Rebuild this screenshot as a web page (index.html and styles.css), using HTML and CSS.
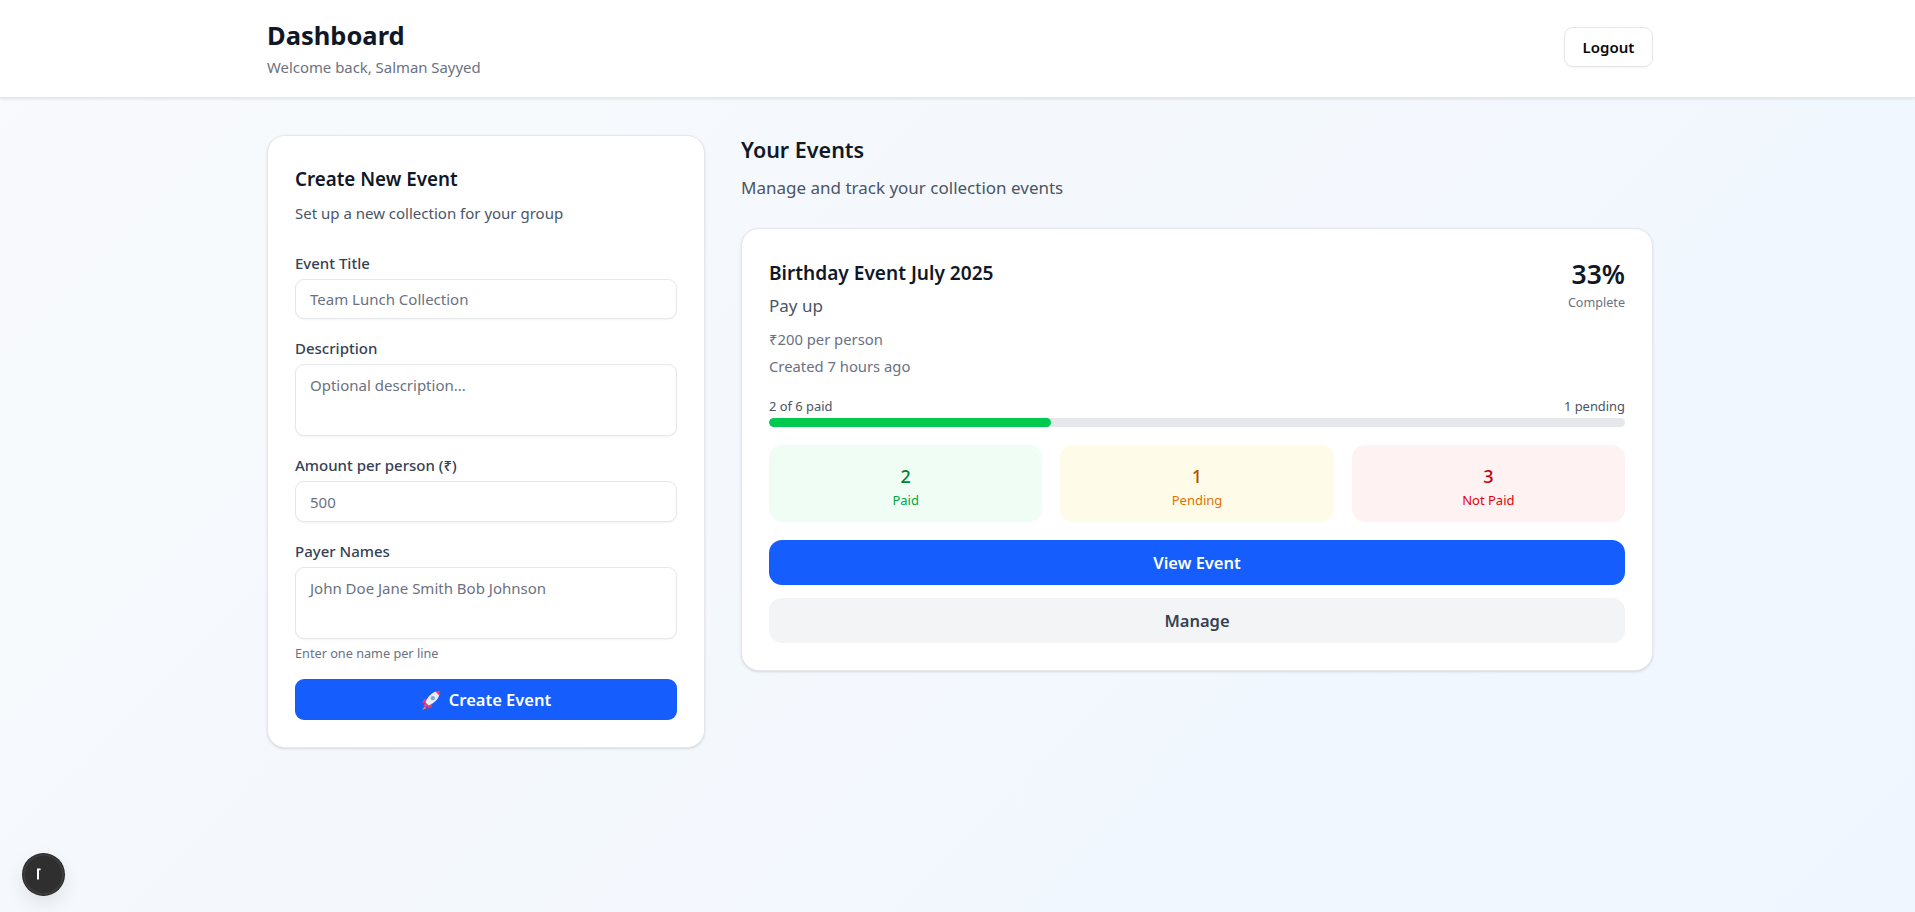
FILE: index.html
```html
<!DOCTYPE html>
<html>
<head>
<title>Dashboard</title>
<meta charset="UTF-8" />
<link rel="stylesheet" href="styles.css">
</head>
<body>
<header class="topbar">
	<div class="topbar-inner">
		<div>
			<h1 class="page-title">Dashboard</h1>
			<p class="page-sub">Welcome back, Salman Sayyed</p>
		</div>
		<button class="logout" type="button">Logout</button>
	</div>
</header>
<main class="layout">
	<section class="card create">
		<h2 class="create-title">Create New Event</h2>
		<p class="create-sub">Set up a new collection for your group</p>
		<form>
			<div class="field">
				<label for="title">Event Title</label>
				<input id="title" type="text" placeholder="Team Lunch Collection">
			</div>
			<div class="field">
				<label for="desc">Description</label>
				<textarea id="desc" placeholder="Optional description..."></textarea>
			</div>
			<div class="field">
				<label for="amount">Amount per person (₹)</label>
				<input id="amount" class="input-tall" type="text" placeholder="500">
			</div>
			<div class="field field-last">
				<label for="payers">Payer Names</label>
				<textarea id="payers" placeholder="John Doe Jane Smith Bob Johnson"></textarea>
				<p class="hint">Enter one name per line</p>
			</div>
			<button class="btn btn-primary btn-create" type="button">
				<svg class="rocket" viewBox="0 0 20 20" width="20" height="20" aria-hidden="true">
					<path d="M3 17 L1 20 L5 18.6 L4.6 17Z" fill="#f08a2c"/>
					<path d="M6 8.6 L2.6 9.4 L1.2 13.4 L5 12.6Z" fill="#e8396a"/>
					<path d="M11.4 14 L10.6 17.4 L6.6 18.8 L7.4 15Z" fill="#e8396a"/>
					<path d="M4.6 12.8 L7.2 15.4 L4.6 17.6 L2.4 15.4Z" fill="#f0447a"/>
					<path d="M4.6 12.4 C6.4 7 10.8 2.6 15.4 1.6 L18.4 4.6 C17.4 9.2 13 13.6 7.6 15.4Z" fill="#eceef3"/>
					<path d="M14.6 1.8 C16 1.2 17.8 .8 19.4 .6 C19.2 2.2 18.8 4 18.2 5.4Z" fill="#e8396a"/>
					<circle cx="11.8" cy="8.2" r="2.1" fill="#7fa9d6"/>
				</svg>
				Create Event
			</button>
		</form>
	</section>
	<section class="events">
		<h2 class="events-title">Your Events</h2>
		<p class="events-sub">Manage and track your collection events</p>
		<article class="card event">
			<div class="event-head">
				<div>
					<h3 class="event-title">Birthday Event July 2025</h3>
					<p class="event-desc">Pay up</p>
					<p class="event-meta">₹200 per person</p>
					<p class="event-meta">Created 7 hours ago</p>
				</div>
				<div class="percent">
					<div class="percent-num">33%</div>
					<div class="percent-label">Complete</div>
				</div>
			</div>
			<div class="progress-labels"><span>2 of 6 paid</span><span>1 pending</span></div>
			<div class="progress"><div class="progress-fill" style="width: 33%"></div></div>
			<div class="stats">
				<div class="stat stat-paid"><div class="stat-num">2</div><div class="stat-label">Paid</div></div>
				<div class="stat stat-pending"><div class="stat-num">1</div><div class="stat-label">Pending</div></div>
				<div class="stat stat-unpaid"><div class="stat-num">3</div><div class="stat-label">Not Paid</div></div>
			</div>
			<button class="btn btn-primary btn-wide" type="button">View Event</button>
			<button class="btn btn-muted btn-wide" type="button">Manage</button>
		</article>
	</section>
</main>
<div class="dev-badge">
	<svg viewBox="0 0 16 16" width="16" height="16" aria-hidden="true">
		<path d="M1 1.4 H4.6 V3.2 H3 V12.6 H1Z" fill="#fff"/>
	</svg>
</div>
</body>
</html>
```

FILE: styles.css
```css
*{
	box-sizing: border-box ;
}
html, body{
	height: 100% ;
}
body{
	margin: 0 ;
	font-family: "Noto Sans", "Open Sans", sans-serif ;
	color: #101828 ;
	background: linear-gradient(135deg, #f8fafc, #eff6ff) ;
}
h1, h2, h3, p{
	margin: 0 ;
}
button, input, textarea{
	font-family: inherit ;
}

.topbar{
	height: 98px ;
	background: #fff ;
	border-bottom: 1px solid #e5e7eb ;
	box-shadow: 0 1px 3px rgba(0, 0, 0, .1) ;
}
.topbar-inner{
	width: 1386px ;
	margin-left: 267px ;
	padding-top: 17px ;
	display: flex ;
	align-items: flex-start ;
	justify-content: space-between ;
}
.page-title{
	font-size: 25.5px ;
	line-height: 36px ;
	font-weight: 700 ;
}
.page-sub{
	margin-top: 2px ;
	font-size: 14.9px ;
	line-height: 24px ;
	color: #6a7282 ;
}
.logout{
	width: 89px ;
	height: 40px ;
	margin-top: 10px ;
	font-size: 15px ;
	font-weight: 600 ;
	color: #0a0a0a ;
	background: #fff ;
	border: 1px solid #e5e7eb ;
	border-radius: 9px ;
	box-shadow: 0 1px 2px rgba(0, 0, 0, .05) ;
}

.layout{
	width: 1386px ;
	margin-left: 267px ;
	padding-top: 37px ;
	display: grid ;
	grid-template-columns: 438px 1fr ;
	gap: 36px ;
	align-items: start ;
}
.card{
	background: #fff ;
	border: 1px solid #e5e7eb ;
	border-radius: 18px ;
	box-shadow: 0 1px 3px rgba(0, 0, 0, .1), 0 1px 2px -1px rgba(0, 0, 0, .1) ;
}
.create{
	padding: 30px 27px 27px ;
}
.create-title{
	font-size: 18.8px ;
	line-height: 27px ;
	font-weight: 600 ;
}
.create-sub{
	margin-top: 8px ;
	font-size: 15px ;
	line-height: 24px ;
	color: #4a5565 ;
}
form{
	margin-top: 28px ;
}
.field{
	margin-bottom: 19px ;
}
.field-last{
	margin-bottom: 0 ;
}
label{
	display: block ;
	font-size: 15px ;
	line-height: 21px ;
	font-weight: 500 ;
	color: #364153 ;
	margin-bottom: 5px ;
}
input, textarea{
	display: block ;
	width: 100% ;
	padding: 8px 14px ;
	font-size: 15px ;
	line-height: 24px ;
	color: #101828 ;
	background: #fff ;
	border: 1px solid #e5e7eb ;
	border-radius: 9px ;
	box-shadow: 0 1px 2px rgba(0, 0, 0, .05) ;
	resize: none ;
	outline: none ;
}
input{
	height: 40px ;
}
.input-tall{
	height: 41px ;
}
textarea{
	height: 72px ;
}
::placeholder{
	color: #6a7282 ;
	opacity: 1 ;
}
.hint{
	margin-top: 4px ;
	font-size: 12.7px ;
	line-height: 20px ;
	color: #6a7282 ;
}
.btn{
	display: flex ;
	align-items: center ;
	justify-content: center ;
	width: 100% ;
	border: 0 ;
	border-radius: 9px ;
	font-weight: 600 ;
}
.btn-primary{
	background: #155dfc ;
	color: #fff ;
}
.btn-muted{
	background: #f3f4f6 ;
	color: #364153 ;
}
.btn-create{
	height: 41px ;
	margin-top: 16px ;
	font-size: 16.5px ;
	gap: 8px ;
}
.btn-wide{
	height: 45px ;
	font-size: 16.5px ;
	border-radius: 13px ;
}
.btn-wide + .btn-wide{
	margin-top: 13px ;
}

.events-title{
	font-size: 21.5px ;
	line-height: 30px ;
	font-weight: 600 ;
	color: #101828 ;
}
.events-sub{
	margin-top: 9px ;
	font-size: 17px ;
	line-height: 27px ;
	color: #4a5565 ;
}
.event{
	margin-top: 27px ;
	padding: 30px 27px 27px ;
}
.event-head{
	display: flex ;
	justify-content: space-between ;
}
.event-title{
	font-size: 19.1px ;
	line-height: 28px ;
	font-weight: 600 ;
}
.event-desc{
	margin-top: 5px ;
	font-size: 17px ;
	line-height: 27px ;
	color: #4a5565 ;
}
.event-desc + .event-meta{
	margin-top: 8px ;
}
.event-meta{
	margin-top: 3px ;
	font-size: 14.8px ;
	line-height: 24px ;
	color: #6a7282 ;
}
.percent{
	margin-top: -3px ;
	text-align: right ;
}
.percent-num{
	font-size: 26.5px ;
	line-height: 36px ;
	font-weight: 600 ;
}
.percent-label{
	margin-top: 2px ;
	font-size: 12.6px ;
	line-height: 18px ;
	color: #6a7282 ;
}
.progress-labels{
	display: flex ;
	justify-content: space-between ;
	margin-top: 18px ;
	font-size: 12.9px ;
	line-height: 20px ;
	color: #4a5565 ;
}
.progress{
	height: 9px ;
	margin-top: 2px ;
	background: #e5e7eb ;
	border-radius: 5px ;
	overflow: hidden ;
}
.progress-fill{
	height: 100% ;
	background: #00c950 ;
	border-radius: 5px ;
}
.stats{
	display: grid ;
	grid-template-columns: repeat(3, 1fr) ;
	gap: 18px ;
	margin: 18px 0 ;
}
.stat{
	height: 77px ;
	padding-top: 18px ;
	text-align: center ;
	border-radius: 13px ;
}
.stat-num{
	font-size: 18px ;
	line-height: 27px ;
	font-weight: 500 ;
}
.stat-label{
	font-size: 13px ;
	line-height: 20px ;
}
.stat-paid{
	background: #f0fdf4 ;
}
.stat-paid .stat-num{
	color: #008236 ;
}
.stat-paid .stat-label{
	color: #00a63e ;
}
.stat-pending{
	background: #fefce8 ;
}
.stat-pending .stat-num{
	color: #bb4d00 ;
}
.stat-pending .stat-label{
	color: #e17100 ;
}
.stat-unpaid{
	background: #fef2f2 ;
}
.stat-unpaid .stat-num{
	color: #c10007 ;
}
.stat-unpaid .stat-label{
	color: #e7000b ;
}

.dev-badge{
	position: fixed ;
	left: 23px ;
	bottom: 17px ;
	width: 41px ;
	height: 41px ;
	display: flex ;
	align-items: center ;
	justify-content: center ;
	background: #2f2f2f ;
	border: 2px solid #3c3c3c ;
	border-radius: 50% ;
	box-shadow: 0 0 0 1px #262626, 0 8px 20px rgba(0, 0, 0, .1) ;
}
```
